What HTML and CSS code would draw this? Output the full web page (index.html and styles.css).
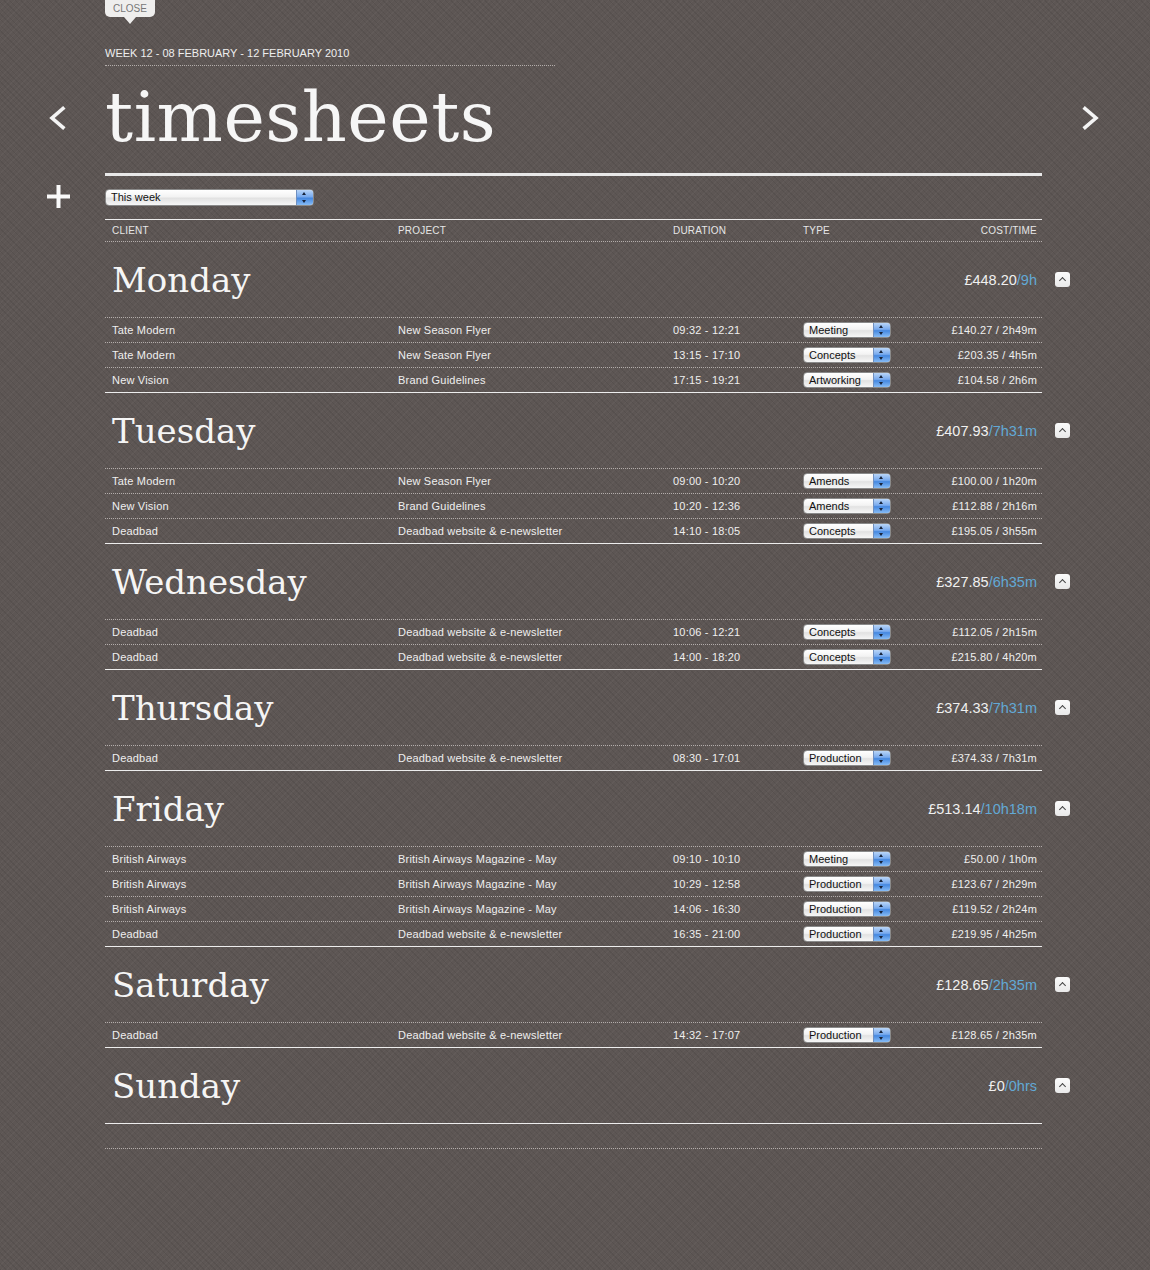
FILE: index.html
```html
<!DOCTYPE html>
<html lang="en">
<head>
<meta charset="utf-8">
<title>timesheets</title>
<link rel="stylesheet" href="styles.css">
</head>
<body>
<div class="page">
  <div class="close-tab">CLOSE</div>
  <div class="week">WEEK 12 - 08 FEBRUARY - 12 FEBRUARY 2010</div>

  <a class="nav prev" href="#"><svg width="18" height="24" viewBox="0 0 18 24"><polyline points="15,2.5 4,12 15,21.5" fill="none" stroke="#f4f4f4" stroke-width="3.6" stroke-linecap="square"/></svg></a>
  <h1 class="title">timesheets</h1>
  <a class="nav next" href="#"><svg width="18" height="24" viewBox="0 0 18 24"><polyline points="3,2.5 14,12 3,21.5" fill="none" stroke="#f4f4f4" stroke-width="3.6" stroke-linecap="square"/></svg></a>

  <div class="rule"></div>

  <a class="add" href="#"><svg width="23" height="23" viewBox="0 0 23 23"><rect x="9.5" y="0" width="4" height="23" fill="#fafafa"/><rect x="0" y="9.5" width="23" height="4" fill="#fafafa"/></svg></a>
  <div class="filter">
    <div class="select wide"><span class="select-text">This week</span><span class="stepper"></span></div>
  </div>

  <div class="sheet">
    <div class="thead cols">
      <span>Client</span><span>Project</span><span>Duration</span><span>Type</span><span class="right">Cost/Time</span>
    </div>

    <section class="day">
      <div class="day-head"><h2>Monday</h2><span class="total">£448.20<em>/9h</em></span><span class="toggle"></span></div>
      <div class="row cols"><span>Tate Modern</span><span>New Season Flyer</span><span>09:32 - 12:21</span><span><span class="select type"><span class="select-text">Meeting</span><span class="stepper"></span></span></span><span class="right">£140.27 / 2h49m</span></div>
      <div class="row cols"><span>Tate Modern</span><span>New Season Flyer</span><span>13:15 - 17:10</span><span><span class="select type"><span class="select-text">Concepts</span><span class="stepper"></span></span></span><span class="right">£203.35 / 4h5m</span></div>
      <div class="row cols"><span>New Vision</span><span>Brand Guidelines</span><span>17:15 - 19:21</span><span><span class="select type"><span class="select-text">Artworking</span><span class="stepper"></span></span></span><span class="right">£104.58 / 2h6m</span></div>
    </section>

    <section class="day">
      <div class="day-head"><h2>Tuesday</h2><span class="total">£407.93<em>/7h31m</em></span><span class="toggle"></span></div>
      <div class="row cols"><span>Tate Modern</span><span>New Season Flyer</span><span>09:00 - 10:20</span><span><span class="select type"><span class="select-text">Amends</span><span class="stepper"></span></span></span><span class="right">£100.00 / 1h20m</span></div>
      <div class="row cols"><span>New Vision</span><span>Brand Guidelines</span><span>10:20 - 12:36</span><span><span class="select type"><span class="select-text">Amends</span><span class="stepper"></span></span></span><span class="right">£112.88 / 2h16m</span></div>
      <div class="row cols"><span>Deadbad</span><span>Deadbad website &amp; e-newsletter</span><span>14:10 - 18:05</span><span><span class="select type"><span class="select-text">Concepts</span><span class="stepper"></span></span></span><span class="right">£195.05 / 3h55m</span></div>
    </section>

    <section class="day">
      <div class="day-head"><h2>Wednesday</h2><span class="total">£327.85<em>/6h35m</em></span><span class="toggle"></span></div>
      <div class="row cols"><span>Deadbad</span><span>Deadbad website &amp; e-newsletter</span><span>10:06 - 12:21</span><span><span class="select type"><span class="select-text">Concepts</span><span class="stepper"></span></span></span><span class="right">£112.05 / 2h15m</span></div>
      <div class="row cols"><span>Deadbad</span><span>Deadbad website &amp; e-newsletter</span><span>14:00 - 18:20</span><span><span class="select type"><span class="select-text">Concepts</span><span class="stepper"></span></span></span><span class="right">£215.80 / 4h20m</span></div>
    </section>

    <section class="day">
      <div class="day-head"><h2>Thursday</h2><span class="total">£374.33<em>/7h31m</em></span><span class="toggle"></span></div>
      <div class="row cols"><span>Deadbad</span><span>Deadbad website &amp; e-newsletter</span><span>08:30 - 17:01</span><span><span class="select type"><span class="select-text">Production</span><span class="stepper"></span></span></span><span class="right">£374.33 / 7h31m</span></div>
    </section>

    <section class="day">
      <div class="day-head"><h2>Friday</h2><span class="total">£513.14<em>/10h18m</em></span><span class="toggle"></span></div>
      <div class="row cols"><span>British Airways</span><span>British Airways Magazine - May</span><span>09:10 - 10:10</span><span><span class="select type"><span class="select-text">Meeting</span><span class="stepper"></span></span></span><span class="right">£50.00 / 1h0m</span></div>
      <div class="row cols"><span>British Airways</span><span>British Airways Magazine - May</span><span>10:29 - 12:58</span><span><span class="select type"><span class="select-text">Production</span><span class="stepper"></span></span></span><span class="right">£123.67 / 2h29m</span></div>
      <div class="row cols"><span>British Airways</span><span>British Airways Magazine - May</span><span>14:06 - 16:30</span><span><span class="select type"><span class="select-text">Production</span><span class="stepper"></span></span></span><span class="right">£119.52 / 2h24m</span></div>
      <div class="row cols"><span>Deadbad</span><span>Deadbad website &amp; e-newsletter</span><span>16:35 - 21:00</span><span><span class="select type"><span class="select-text">Production</span><span class="stepper"></span></span></span><span class="right">£219.95 / 4h25m</span></div>
    </section>

    <section class="day">
      <div class="day-head"><h2>Saturday</h2><span class="total">£128.65<em>/2h35m</em></span><span class="toggle"></span></div>
      <div class="row cols"><span>Deadbad</span><span>Deadbad website &amp; e-newsletter</span><span>14:32 - 17:07</span><span><span class="select type"><span class="select-text">Production</span><span class="stepper"></span></span></span><span class="right">£128.65 / 2h35m</span></div>
    </section>

    <section class="day">
      <div class="day-head empty"><h2>Sunday</h2><span class="total">£0<em>/0hrs</em></span><span class="toggle"></span></div>
    </section>

    <div class="footer-row"></div>
  </div>
</div>
</body>
</html>
```

FILE: styles.css
```css
html {
  background-color: #5d5654;
  background-image:
    repeating-linear-gradient(45deg, rgba(0,0,0,0.07) 0 1px, transparent 1px 4px),
    repeating-linear-gradient(-45deg, rgba(255,255,255,0.03) 0 1px, transparent 1px 4px);
  min-height: 100%;
}

body {
  margin: 0;
  font-family: "Liberation Sans", Arial, sans-serif;
  color: #efefef;
}

.page {
  display: grid;
  grid-template-columns: 105px 937px 1fr;
  padding-bottom: 120px;
}

.close-tab {
  grid-column: 2;
  justify-self: start;
  position: relative;
  width: 50px;
  height: 17px;
  line-height: 17px;
  text-align: center;
  font-size: 10px;
  color: #777;
  background: #efeeed;
  border-radius: 0 0 5px 5px;
}

.close-tab::after {
  content: "";
  position: absolute;
  left: 19px;
  top: 17px;
  border-left: 6px solid transparent;
  border-right: 6px solid transparent;
  border-top: 7px solid #efeeed;
}

.week {
  grid-column: 2;
  justify-self: start;
  width: 450px;
  margin-top: 30px;
  font-size: 11px;
  line-height: 13px;
  color: #eeeeee;
  padding-bottom: 5px;
  border-bottom: 1px dotted #b3adab;
}

.nav {
  display: block;
  align-self: start;
  margin-top: 40px;
}

.nav svg {
  display: block;
}

.prev {
  grid-column: 1;
  justify-self: start;
  margin-left: 48px;
}

.next {
  grid-column: 3;
  justify-self: start;
  margin-left: 40px;
}

.title {
  grid-column: 2;
  margin: 16px 0 0 0;
  font-family: "DejaVu Serif", "Liberation Serif", serif;
  font-weight: normal;
  font-size: 70px;
  line-height: 70px;
  height: 70px;
  color: #f6f6f6;
  letter-spacing: 0.5px;
}

.rule {
  grid-column: 2;
  margin-top: 21px;
  height: 3px;
  background: #e8e8e8;
}

.add {
  grid-column: 1;
  justify-self: start;
  align-self: start;
  margin-left: 47px;
  margin-top: 9px;
  margin-bottom: -3px;
  display: block;
  height: 23px;
}

.add svg {
  display: block;
}

.filter {
  grid-column: 2;
  margin-top: 13px;
  height: 17px;
}

.select {
  display: flex;
  align-items: stretch;
  box-sizing: border-box;
  border: 1px solid #8a8a8a;
  border-radius: 4px;
  background: linear-gradient(#ffffff, #f3f3f3 45%, #e2e2e2 55%, #f6f6f6);
  color: #111;
  font-size: 11px;
  letter-spacing: 0;
  overflow: hidden;
}

.select-text {
  flex: 1;
  padding-left: 5px;
  white-space: nowrap;
}

.select.wide {
  width: 209px;
  height: 17px;
  line-height: 15px;
}

.select.type {
  width: 88px;
  height: 16px;
  line-height: 14px;
}

.stepper {
  position: relative;
  width: 16px;
  border-left: 1px solid #6f8fbf;
  background: linear-gradient(#b9d5f7, #78aaee 45%, #4588e0 55%, #86bbf5);
}

.stepper::before,
.stepper::after {
  content: "";
  position: absolute;
  left: 5px;
  border-left: 2.5px solid transparent;
  border-right: 2.5px solid transparent;
}

.stepper::before {
  top: 2px;
  border-bottom: 3.5px solid #17233a;
}

.stepper::after {
  bottom: 2px;
  border-top: 3.5px solid #17233a;
}

.sheet {
  grid-column: 2;
  margin-top: 13px;
  border-top: 1px solid #ececec;
}

.cols {
  display: grid;
  grid-template-columns: 286px 275px 130px 120px 1fr;
  padding: 0 5px 0 7px;
  align-items: center;
}

.right {
  text-align: right;
}

.thead {
  height: 21px;
  font-size: 10px;
  letter-spacing: 0.2px;
  text-transform: uppercase;
  color: #e6e6e6;
  border-bottom: 1px dotted #b3adab;
}

.day {
  border-bottom: 1px solid #ededed;
}

.day-head {
  display: flex;
  align-items: center;
  height: 75px;
  padding: 0 5px 0 7px;
  border-bottom: 1px dotted #b3adab;
}

.day-head.empty {
  border-bottom: none;
}

.day-head h2 {
  margin: 0;
  flex: 1;
  font-family: "DejaVu Serif", "Liberation Serif", serif;
  font-weight: normal;
  font-size: 34px;
  line-height: 1;
  color: #f5f5f5;
}

.total {
  font-size: 14.5px;
  color: #f0f0f0;
}

.total em {
  font-style: normal;
  color: #62a9d6;
}

.toggle {
  position: relative;
  flex: none;
  width: 15px;
  height: 15px;
  margin-left: 18px;
  margin-right: -33px;
  border-radius: 3px;
  background: linear-gradient(#fbfbfb, #e9e9e9);
}

.toggle::after {
  content: "";
  position: absolute;
  left: 5px;
  top: 6px;
  width: 4px;
  height: 4px;
  border-left: 1px solid #444;
  border-top: 1px solid #444;
  transform: rotate(45deg);
}

.row {
  height: 24px;
  font-size: 11px;
  letter-spacing: 0.2px;
  color: #efefef;
  border-bottom: 1px dotted #b3adab;
}

.row:last-child {
  border-bottom: none;
}

.footer-row {
  height: 24px;
  border-bottom: 1px dotted #b3adab;
}
```
